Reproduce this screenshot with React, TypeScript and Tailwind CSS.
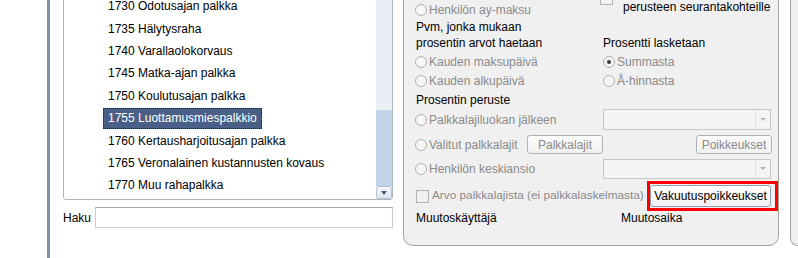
import React from "react";

const ITEMS = [
  "1730 Odotusajan palkka",
  "1735 Hälytysraha",
  "1740 Varallaolokorvaus",
  "1745 Matka-ajan palkka",
  "1750 Koulutusajan palkka",
  "1755 Luottamusmiespalkkio",
  "1760 Kertausharjoitusajan palkka",
  "1765 Veronalainen kustannusten kovaus",
  "1770 Muu rahapalkka",
];

function Radio({ label, checked = false }: { label: string; checked?: boolean }) {
  return (
    <div className="flex items-center text-[#8a8a8a]">
      <span className="flex h-[12px] w-[12px] items-center justify-center rounded-full border border-[#b0b0b0] bg-[#f6f6f6]">
        {checked && <span className="h-[4px] w-[4px] rounded-full bg-[#3a3a3a]" />}
      </span>
      <span className="ml-[2px] whitespace-nowrap">{label}</span>
    </div>
  );
}

function Combo({ h }: { h: string }) {
  return (
    <div className={`flex w-[168px] border border-[#c6c6c6] bg-[#f4f4f4] ${h}`}>
      <div className="flex-1" />
      <div className="flex w-[15px] items-center justify-center border-l border-[#e2e2e2]">
        <span className="h-0 w-0 border-x-[3px] border-t-[3px] border-x-transparent border-t-[#b4b4b4]" />
      </div>
    </div>
  );
}

function DisabledButton({ label }: { label: string }) {
  return (
    <button className="h-[19px] w-[76px] rounded-[3px] border border-[#adb2b8] bg-gradient-to-b from-[#fbfbfb] to-[#f1f1f1] text-[12px] leading-none text-[#8a8a8a]">
      {label}
    </button>
  );
}

function App() {
  return (
    <div className="flex h-[258px] w-[798px] items-start overflow-hidden bg-white font-['Liberation_Sans',Arial,sans-serif] text-[12px] text-black">
      <div className="h-full w-[47px] shrink-0" />
      <div className="h-full w-[3px] shrink-0 bg-[#7b94b3]" />

      {/* list + search */}
      <div className="flex w-[353px] shrink-0 flex-col pl-[13px]">
        <div className="-mt-[6px] flex h-[206px] w-[330px] rounded-b-[3px] border border-[#aab5c2] bg-white">
          <ul className="flex-1">
            {ITEMS.map((t, i) => (
              <li key={t} className="flex h-[22.4px] items-center pl-[39px]">
                <span
                  className={
                    i === 5
                      ? "flex h-[21px] items-center border border-dotted border-[#16202e] bg-[#4a5f86] px-[4px] text-white"
                      : "flex h-[21px] items-center border border-transparent px-[4px]"
                  }
                >
                  {t}
                </span>
              </li>
            ))}
          </ul>
          <div className="flex w-[16px] flex-col">
            <div className="h-[115px] bg-[#eaeff6]" />
            <div className="h-[76px] bg-[#c2d3ea]" />
            <div className="flex h-[13px] items-center justify-center rounded-[2px] border border-[#b6c3d2] bg-gradient-to-b from-[#f4f7fb] to-[#dde5ef]">
              <span className="h-0 w-0 border-x-[3.5px] border-t-[4px] border-x-transparent border-t-[#4e5c6e]" />
            </div>
          </div>
        </div>
        <div className="mt-[7px] flex h-[21px] items-center">
          <span className="w-[32px]">Haku</span>
          <div className="h-[21px] w-[298px] border border-[#c3ccd6] border-t-[#a3a9b0] bg-white" />
        </div>
      </div>

      {/* settings panel */}
      <div className="-mt-[20px] h-[266px] w-[376px] shrink-0 rounded-b-[10px] border border-[#a3a3a3] bg-[#f0f0f0] pl-[11px]">
        <div className="flex h-[38px]">
          <div className="flex w-[188px] items-end">
            <div className="flex h-[18px] items-center">
              <Radio label="Henkilön ay-maksu" />
            </div>
          </div>
          <div className="-ml-[3px] flex">
            <span className="mt-[11px] h-[13px] w-[13px] border border-[#b3b3b3] bg-[#f4f4f4]" />
            <div className="ml-[10px] mt-[19px] whitespace-nowrap leading-[14px]">
              perusteen seurantakohteille
            </div>
          </div>
        </div>

        <div className="flex h-[16px] items-center pl-[1px]">Pvm, jonka mukaan</div>
        <div className="flex h-[16px] items-center">
          <span className="w-[188px] pl-[1px]">prosentin arvot haetaan</span>
          <span>Prosentti lasketaan</span>
        </div>
        <div className="flex h-[22px] items-center">
          <div className="w-[188px]">
            <Radio label="Kauden maksupäivä" />
          </div>
          <Radio label="Summasta" checked />
        </div>
        <div className="flex h-[16px] items-center">
          <div className="w-[188px]">
            <Radio label="Kauden alkupäivä" />
          </div>
          <Radio label="Å-hinnasta" />
        </div>
        <div className="flex h-[21px] items-center pl-[1px]">Prosentin peruste</div>
        <div className="flex h-[19px] items-center">
          <div className="w-[188px]">
            <Radio label="Palkkalajiluokan jälkeen" />
          </div>
          <Combo h="h-[21px]" />
        </div>
        <div className="flex h-[31px] items-center">
          <div className="flex w-[188px] items-center justify-between">
            <Radio label="Valitut palkkalajit" />
            <DisabledButton label="Palkkalajit" />
          </div>
          <div className="flex w-[169px] justify-end">
            <DisabledButton label="Poikkeukset" />
          </div>
        </div>
        <div className="flex h-[17px] items-center">
          <div className="w-[188px]">
            <Radio label="Henkilön keskiansio" />
          </div>
          <Combo h="h-[20px]" />
        </div>

        <div className="mt-[4px] flex h-[30px] items-center">
          <div className="flex w-[235px] items-center pl-[1px] text-[#8a8a8a]">
            <span className="h-[13px] w-[13px] shrink-0 border border-[#b3b3b3] bg-[#eef0f2]" />
            <span className="ml-[3px] whitespace-nowrap text-[11.8px]">
              Arvo palkkalajista (ei palkkalaskelmasta)
            </span>
          </div>
          <div className="border-[3px] border-[#ff0000] py-[1px] pr-[4px]">
            <button className="h-[22px] w-[121px] rounded-[3px] border border-[#8d9db1] bg-gradient-to-b from-white to-[#f0f0f0] text-[12px] leading-none text-black">
              Vakuutuspoikkeukset
            </button>
          </div>
        </div>
        <div className="flex h-[14px] items-center">
          <span className="w-[188px] pl-[1px]">Muutoskäyttäjä</span>
          <span className="ml-[18px]">Muutosaika</span>
        </div>
      </div>

      <div className="h-full w-[11px] shrink-0" />
      <div className="-mt-[20px] h-[266px] flex-1 rounded-bl-[10px] border border-r-0 border-[#a3a3a3] bg-[#f0f0f0]" />
    </div>
  );
}

export default App;
